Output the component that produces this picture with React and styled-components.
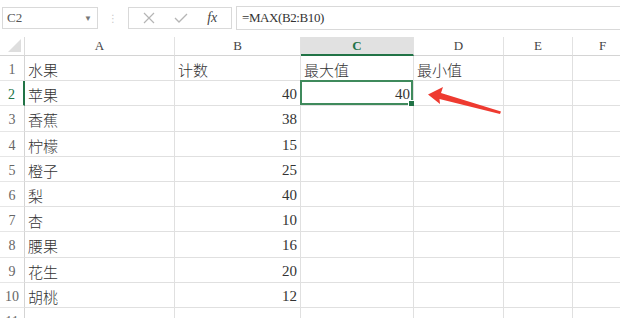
import styled, { createGlobalStyle } from "styled-components";

const GlobalStyle = createGlobalStyle`
  html, body {
    margin: 0;
    padding: 0;
    background: #ffffff;
  }
  body {
    font-family: "Liberation Serif", "Noto Sans CJK SC", serif;
  }
`;

const columns = [
  { key: "A", width: 150 },
  { key: "B", width: 126 },
  { key: "C", width: 113 },
  { key: "D", width: 90 },
  { key: "E", width: 69 },
  { key: "F", width: 60 },
];

const rows = [
  ["水果", "计数", "最大值", "最小值"],
  ["苹果", "40", "40", ""],
  ["香蕉", "38", "", ""],
  ["柠檬", "15", "", ""],
  ["橙子", "25", "", ""],
  ["梨", "40", "", ""],
  ["杏", "10", "", ""],
  ["腰果", "16", "", ""],
  ["花生", "20", "", ""],
  ["胡桃", "12", "", ""],
  ["", "", "", ""],
];

const Page = styled.div`
  position: relative;
  width: 620px;
  height: 326px;
  overflow: hidden;
  background: #fff;
`;

const Toolbar = styled.div`
  display: flex;
  align-items: center;
  height: 24px;
  padding: 6px 0 0 2px;
`;

const NameBox = styled.div`
  box-sizing: border-box;
  width: 96px;
  height: 22px;
  border: 1px solid #d9d9d9;
  display: flex;
  align-items: center;
  justify-content: space-between;
  padding: 0 5px 0 4px;
  font-family: "Liberation Serif", serif;
  font-size: 13px;
  color: #555;
`;

const Caret = styled.span`
  font-size: 8px;
  color: #777;
`;

const Dots = styled.span`
  width: 30px;
  text-align: center;
  color: #c8c8c8;
  font-family: "DejaVu Sans", sans-serif;
  font-size: 10px;
`;

const ButtonBox = styled.div`
  box-sizing: border-box;
  width: 104px;
  height: 22px;
  border: 1px solid #d9d9d9;
  display: flex;
  align-items: center;
  justify-content: space-around;
  padding: 0 4px;
`;

const Fx = styled.span`
  font-family: "Liberation Serif", serif;
  font-style: italic;
  font-size: 14px;
  color: #444;
`;

const FormulaBox = styled.div`
  box-sizing: border-box;
  flex: 1;
  margin-left: 4px;
  height: 24px;
  border-top: 1px solid #d9d9d9;
  border-bottom: 1px solid #d9d9d9;
  border-left: 1px solid #d9d9d9;
  display: flex;
  align-items: center;
  padding-left: 5px;
  font-size: 13px;
  color: #333;
  letter-spacing: -0.4px;
`;

const Sheet = styled.div`
  margin-top: 7px;
  display: grid;
  grid-template-columns: 25px ${columns.map((c) => `${c.width}px`).join(" ")};
  grid-template-rows: 19px;
  grid-auto-rows: 25.2px;
  height: 281px;
  overflow: hidden;
`;

const Corner = styled.div`
  position: relative;
  border-right: 1px solid #dcdcdc;
  border-bottom: 1px solid #d4d4d4;
  &::after {
    content: "";
    position: absolute;
    right: 3px;
    bottom: 3px;
    border-left: 13px solid transparent;
    border-bottom: 13px solid #dedede;
  }
`;

const ColHead = styled.div`
  box-sizing: border-box;
  display: flex;
  align-items: center;
  justify-content: center;
  font-size: 13px;
  background: ${(p) => (p.$active ? "#e1e1e1" : "#fff")};
  color: ${(p) => (p.$active ? "#217346" : "#444")};
  font-weight: ${(p) => (p.$active ? "bold" : "normal")};
  border-right: 1px solid #e2e2e2;
  border-bottom: ${(p) => (p.$active ? "2px solid #217346" : "1px solid #d4d4d4")};
`;

const RowHead = styled.div`
  box-sizing: border-box;
  display: flex;
  align-items: center;
  justify-content: center;
  padding-top: 4px;
  font-size: 14px;
  color: ${(p) => (p.$active ? "#217346" : "#666")};
  border-right: ${(p) => (p.$active ? "2px solid #217346" : "1px solid #d4d4d4")};
  border-bottom: 1px solid #e6e6e6;
`;

const Cell = styled.div`
  box-sizing: border-box;
  position: relative;
  display: flex;
  align-items: center;
  justify-content: ${(p) => (p.$num ? "flex-end" : "flex-start")};
  padding: 3px 3px 0 3px;
  font-size: 15px;
  font-weight: 300;
  color: #333;
  border-right: 1px solid #e0e0e0;
  border-bottom: 1px solid #e0e0e0;
  white-space: nowrap;
`;

const Selection = styled.div`
  position: absolute;
  left: -1px;
  top: -1px;
  right: 0;
  bottom: 0;
  border: 2px solid #3f8a5c;
  pointer-events: none;
  &::after {
    content: "";
    position: absolute;
    right: -4px;
    bottom: -4px;
    width: 5px;
    height: 5px;
    background: #217346;
    border: 1px solid #fff;
  }
`;

const Arrow = styled.svg`
  position: absolute;
  left: 0;
  top: 0;
  width: 620px;
  height: 326px;
  pointer-events: none;
`;

const isNum = (v) => /^\d+$/.test(v);

const RowLine = ({ index, cells }) => {
  const rowNo = index + 1;
  const full = [...cells, "", ""];
  return (
    <>
      <RowHead $active={rowNo === 2}>{rowNo}</RowHead>
      {full.map((v, j) => (
        <Cell key={j} $num={isNum(v)}>
          {v}
          {rowNo === 2 && j === 2 && <Selection />}
        </Cell>
      ))}
    </>
  );
};

const App = () => {
  return (
    <Page>
      <GlobalStyle />
      <Toolbar>
        <NameBox>
          C2
          <Caret>▼</Caret>
        </NameBox>
        <Dots>⋮</Dots>
        <ButtonBox>
          <svg width="12" height="12" viewBox="0 0 12 12">
            <path d="M1 1L11 11M11 1L1 11" stroke="#b5b5b5" strokeWidth="1.2" fill="none" />
          </svg>
          <svg width="14" height="12" viewBox="0 0 14 12">
            <path d="M1 6L5 10L13 2" stroke="#b5b5b5" strokeWidth="1.3" fill="none" />
          </svg>
          <Fx>fx</Fx>
        </ButtonBox>
        <FormulaBox>=MAX(B2:B10)</FormulaBox>
      </Toolbar>

      <Sheet>
        <Corner />
        {columns.map((c) => (
          <ColHead key={c.key} $active={c.key === "C"}>
            {c.key}
          </ColHead>
        ))}
        {rows.map((r, i) => (
          <RowLine key={i} index={i} cells={r} />
        ))}
      </Sheet>

      <Arrow viewBox="0 0 620 326">
        <polygon
          points="428,94.5 443,87 441,93 501,111.5 500,114 439.5,99 440,104"
          fill="#ee3a30"
        />
      </Arrow>
    </Page>
  );
};

export default App;
